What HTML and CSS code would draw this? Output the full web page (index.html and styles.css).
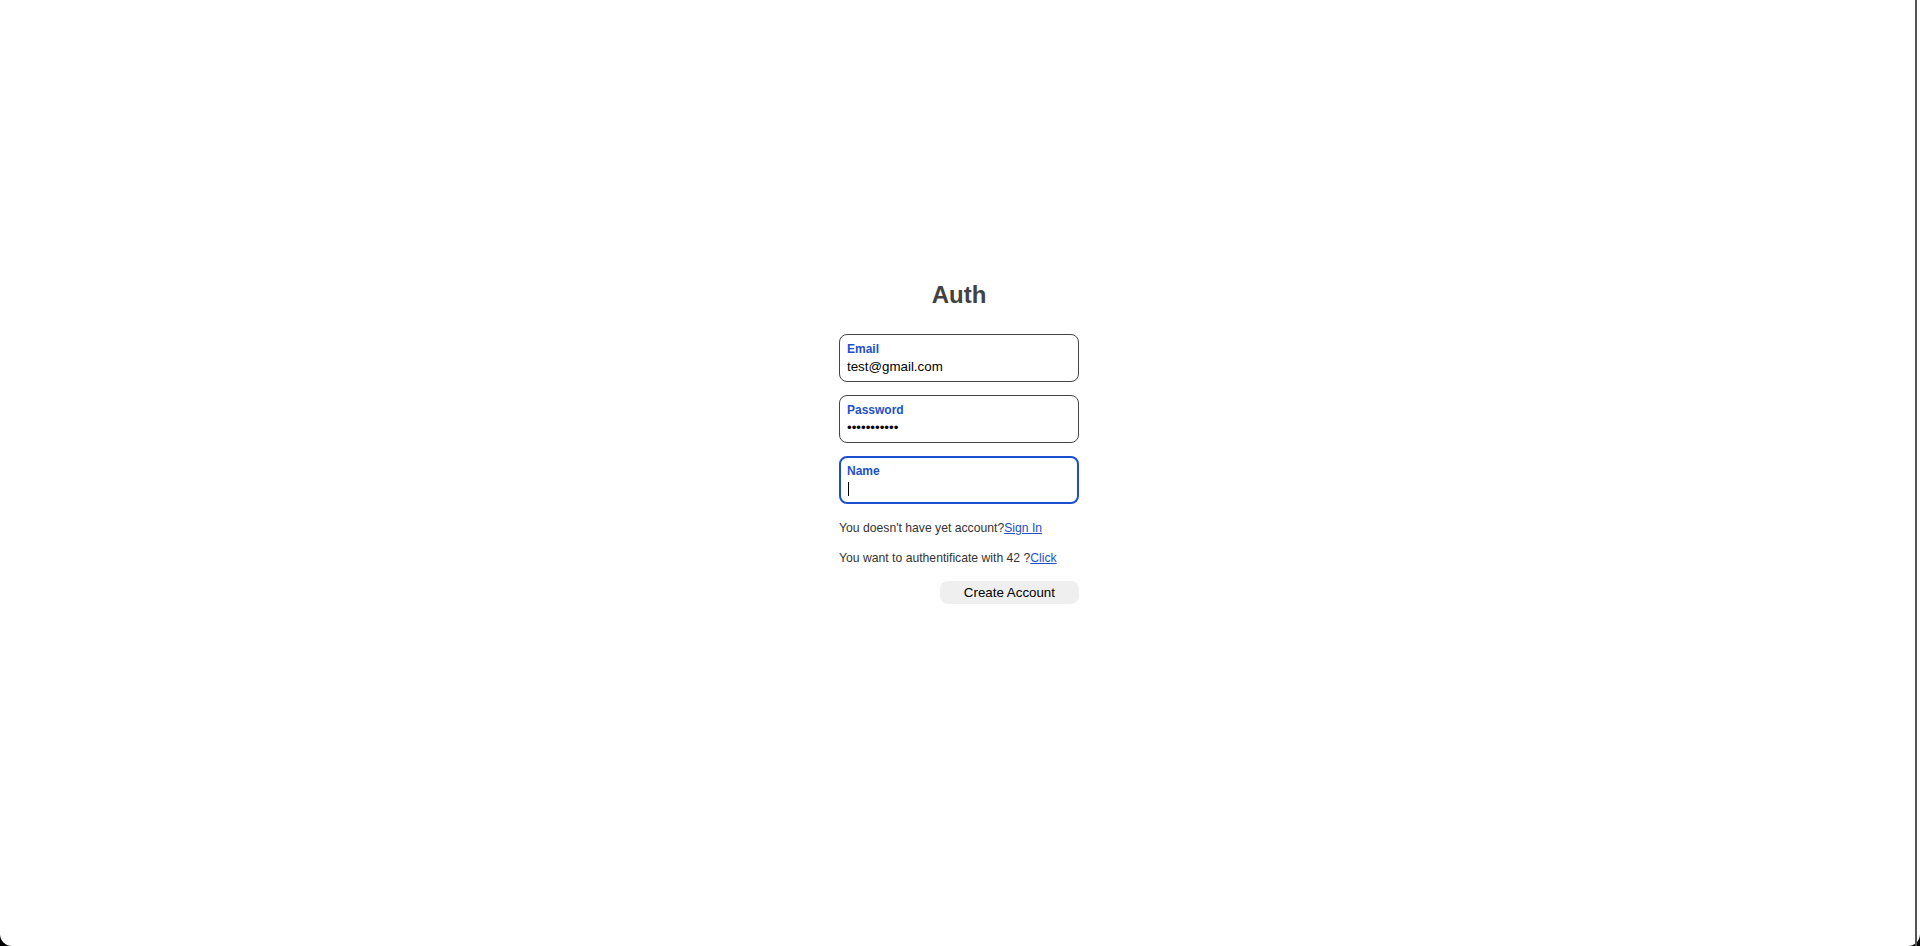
FILE: index.html
```html
<!DOCTYPE html>
<html lang="en">
<head>
<meta charset="utf-8">
<title>Auth</title>
<link rel="stylesheet" href="styles.css">
</head>
<body>
<div class="page">
  <main class="auth">
    <h1 class="title">Auth</h1>
    <form class="form">
      <div class="field">
        <span class="label">Email</span>
        <span class="value">test@gmail.com</span>
      </div>
      <div class="field">
        <span class="label">Password</span>
        <span class="value">•••••••••••</span>
      </div>
      <div class="field field-focus">
        <span class="label">Name</span>
        <span class="value"><span class="caret"></span></span>
      </div>
      <p class="hint">You doesn't have yet account?<a href="#" class="link">Sign In</a></p>
      <p class="hint">You want to authentificate with 42 ?<a href="#" class="link">Click</a></p>
      <div class="actions">
        <button type="button" class="btn">Create Account</button>
      </div>
    </form>
  </main>
  <div class="edge"></div>
</div>
</body>
</html>
```
FILE: styles.css
```css
html, body {
  margin: 0;
  padding: 0;
  background: #000;
  height: 100%;
}
body {
  font-family: "Liberation Sans", Arial, sans-serif;
  color: #333;
}
.page {
  position: relative;
  box-sizing: border-box;
  height: 946px;
  background: #fff;
  border-radius: 0 0 12px 12px;
  display: flex;
  justify-content: center;
  padding-top: 281px;
  padding-right: 2px;
}
.edge {
  position: absolute;
  top: 0;
  right: 3px;
  width: 2px;
  height: 100%;
  background: #555;
}
.auth {
  width: 240px;
  display: flex;
  flex-direction: column;
}
.title {
  margin: 0;
  font-size: 24px;
  line-height: 28px;
  font-weight: bold;
  text-align: center;
  color: #424242;
}
.form {
  margin-top: 25px;
  display: flex;
  flex-direction: column;
}
.field {
  box-sizing: border-box;
  height: 48px;
  border: 1px solid #444;
  border-radius: 8px;
  padding: 7px 7px 0;
  display: flex;
  flex-direction: column;
  margin-bottom: 13px;
}
.field-focus {
  border: 2px solid #1c4fd0;
  padding: 6px 6px 0;
}
.label {
  font-size: 12px;
  line-height: 14px;
  font-weight: bold;
  color: #1d50c8;
}
.value {
  margin-top: 3px;
  font-size: 13.333px;
  line-height: 16px;
  color: #000;
  height: 16px;
  display: flex;
  align-items: center;
}
.caret {
  display: block;
  width: 1px;
  height: 14px;
  background: #000;
  margin-left: 1px;
}
.hint {
  margin: 4px 0 12px;
  font-size: 12.2px;
  line-height: 14px;
  color: #333;
}
.hint + .hint {
  margin-top: 4px;
}
.link {
  color: #1d50c8;
  text-decoration: underline;
}
.actions {
  display: flex;
  justify-content: flex-end;
  margin-top: 4px;
}
.btn {
  font-family: "Liberation Sans", Arial, sans-serif;
  font-size: 13.333px;
  line-height: 15px;
  height: 23px;
  padding: 0 24px;
  border: none;
  border-radius: 8px;
  background: #efefef;
  color: #000;
}
```
